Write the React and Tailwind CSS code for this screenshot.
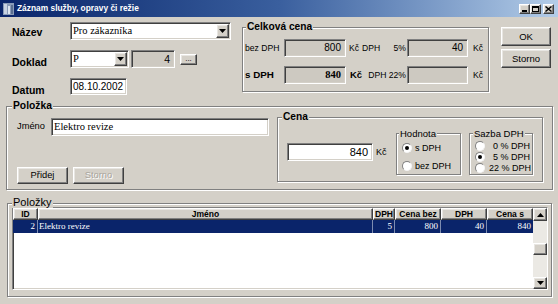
import React from "react";

const sunken =
  "border border-t-[#808080] border-l-[#808080] border-b-white border-r-white shadow-[inset_1px_1px_0_#404040,inset_-1px_-1px_0_#d4d0c8]";
const raised =
  "border border-t-white border-l-white border-b-[#404040] border-r-[#404040] shadow-[inset_-1px_-1px_0_#808080,inset_1px_1px_0_#e8e6e2]";
const group =
  "relative border border-[#808080] shadow-[inset_1px_1px_0_#fff,1px_1px_0_#fff]";

function Down() {
  return (
    <svg width="7" height="4" viewBox="0 0 7 4">
      <path d="M0 0h7L3.5 4z" fill="#000" />
    </svg>
  );
}
function Up() {
  return (
    <svg width="7" height="4" viewBox="0 0 7 4">
      <path d="M0 4h7L3.5 0z" fill="#000" />
    </svg>
  );
}

function DropBtn() {
  return (
    <div className={`${raised} bg-[#d4d0c8] w-[13px] h-[14px] flex items-center justify-center shrink-0 mr-[1px]`}>
      <Down />
    </div>
  );
}

function Radio({ checked }) {
  return (
    <span className="w-[10px] h-[10px] rounded-full bg-white border border-t-[#808080] border-l-[#808080] border-b-[#f4f4f4] border-r-[#f4f4f4] flex items-center justify-center shrink-0">
      {checked ? <span className="w-[4px] h-[4px] rounded-full bg-black" /> : null}
    </span>
  );
}

function Legend({ children, className }) {
  return (
    <span className={`absolute bg-[#d4d0c8] px-[1px] leading-none ${className}`}>{children}</span>
  );
}

export default function App() {
  const serif = "font-['Liberation_Serif','Times_New_Roman',serif]";
  return (
    <div className="w-[558px] h-[304px] bg-[#d4d0c8] overflow-hidden flex flex-col font-['Liberation_Sans',Arial,sans-serif] text-[9px] text-black leading-none">
      {/* Title bar */}
      <div className="h-[17px] shrink-0 flex items-center bg-linear-to-r from-[#0a246a] via-[#3a5f9e] to-[#b4cde8]">
        <svg className="ml-[3px]" width="11" height="12" viewBox="0 0 11 12">
          <rect x="0" y="0" width="11" height="12" fill="#8a9bb8" />
          <rect x="1" y="1" width="3" height="10" fill="#c8d2e2" />
          <rect x="5" y="3" width="2" height="8" fill="#dfe6f0" />
          <rect x="8" y="2" width="2" height="9" fill="#5b6f92" />
        </svg>
        <span className="ml-[3px] text-white font-bold text-[8.4px] tracking-[0px]">Záznam služby, opravy či režie</span>
        <div className="ml-auto mr-[4px] flex items-center">
          <div className={`${raised} bg-[#d4d0c8] w-[11px] h-[10px] flex items-end justify-center pb-[1px]`}>
            <span className="w-[5px] h-[2px] bg-black" />
          </div>
          <div className={`${raised} bg-[#d4d0c8] w-[11px] h-[10px] flex items-center justify-center`}>
            <span className="w-[7px] h-[6px] border border-black border-t-2" />
          </div>
          <div className={`${raised} bg-[#d4d0c8] w-[11px] h-[10px] ml-[2px] flex items-center justify-center`}>
            <svg width="7" height="6" viewBox="0 0 7 6">
              <path d="M0.5 0.5L6.5 5.5M6.5 0.5L0.5 5.5" stroke="#000" strokeWidth="1.4" />
            </svg>
          </div>
        </div>
      </div>

      {/* Top section */}
      <div className="h-[89px] shrink-0 flex items-start">
        <div className="w-[231px] pl-[12px] flex flex-col">
          <div className="mt-[5px] h-[18px] flex items-start">
            <span className="w-[58px] pt-[5px] font-bold text-[10.5px]">Název</span>
            <div className={`${sunken} bg-white w-[161px] h-[18px] flex items-center`}>
              <span className={`${serif} text-[10.5px] pl-[2px] flex-1`}>Pro zákazníka</span>
              <DropBtn />
            </div>
          </div>
          <div className="mt-[10px] h-[18px] flex items-start">
            <span className="w-[58px] pt-[7px] font-bold text-[10.5px]">Doklad</span>
            <div className={`${sunken} bg-white w-[59px] h-[18px] flex items-center`}>
              <span className={`${serif} text-[10.5px] pl-[2px] flex-1`}>P</span>
              <DropBtn />
            </div>
            <div className={`${sunken} bg-[#cdc9c1] ml-[2px] w-[44px] h-[18px] flex items-center justify-end pr-[4px] text-[10.5px]`}>4</div>
            <div className={`${raised} bg-[#d4d0c8] ml-[5px] mt-[4px] w-[17px] h-[11px] flex items-end justify-center text-[8px] pb-[1px]`}>...</div>
          </div>
          <div className="mt-[10px] h-[17px] flex items-start">
            <span className="w-[58px] pt-[7px] font-bold text-[10.5px]">Datum</span>
            <div className={`${sunken} bg-white w-[57px] h-[17px] flex items-center pl-[2px] text-[10px]`}>08.10.2002</div>
          </div>
        </div>

        {/* Celková cena */}
        <div className={`${group} ml-[11px] mt-[10px] w-[247px] h-[65px] flex flex-col`}>
          <Legend className="-top-[6px] left-[3px] font-bold text-[10.2px]">Celková cena</Legend>
          <div className="mt-[11px] h-[18px] flex items-center pl-[2px]">
            <span className="w-[39px] text-[8.6px]">bez DPH</span>
            <div className={`${sunken} bg-[#cdc9c1] w-[62px] h-[18px] flex items-center justify-end pr-[4px] text-[10px]`}>800</div>
            <div className="w-[61px] flex items-center text-[8.6px]">
              <span className="ml-[3px]">Kč</span>
              <span className="ml-[3px]">DPH</span>
              <span className="ml-auto mr-[1px]">5%</span>
            </div>
            <div className={`${sunken} bg-[#cdc9c1] w-[61px] h-[18px] flex items-center justify-end pr-[4px] text-[10px]`}>40</div>
            <span className="ml-[5px] text-[8.6px]">Kč</span>
          </div>
          <div className="mt-[9px] h-[18px] flex items-center pl-[2px]">
            <span className="w-[39px] font-bold text-[9.8px]">s DPH</span>
            <div className={`${sunken} bg-[#cdc9c1] w-[62px] h-[18px] flex items-center justify-end pr-[4px] text-[10.5px] font-bold ${serif}`}>840</div>
            <div className="w-[61px] flex items-center text-[8.6px]">
              <span className="ml-[4px] font-bold text-[9.5px]">Kč</span>
              <span className="ml-auto mr-[1px]">DPH 22%</span>
            </div>
            <div className={`${sunken} bg-[#cdc9c1] w-[61px] h-[18px]`} />
            <span className="ml-[5px] text-[8.6px]">Kč</span>
          </div>
        </div>

        {/* Buttons */}
        <div className="ml-[12px] mt-[10px] flex flex-col gap-[3px]">
          <div className={`${raised} bg-[#d4d0c8] w-[50px] h-[19px] flex items-center justify-center text-[9.5px]`}>OK</div>
          <div className={`${raised} bg-[#d4d0c8] w-[50px] h-[19px] flex items-center justify-center text-[9.5px]`}>Storno</div>
        </div>
      </div>

      {/* Položka */}
      <div className={`${group} ml-[6px] w-[547px] h-[84px] shrink-0 flex items-start`}>
        <Legend className="-top-[6px] left-[5px] font-bold text-[10.3px]">Položka</Legend>
        <div className="w-[270px] pl-[10px] flex flex-col">
          <div className="mt-[11px] h-[18px] flex items-center">
            <span className="w-[34px] text-[9.3px]">Jméno</span>
            <div className={`${sunken} bg-white w-[218px] h-[18px] flex items-center pl-[2px] ${serif} text-[10.5px]`}>Elektro revize</div>
          </div>
          <div className="mt-[31px] flex gap-[5px]">
            <div className={`${raised} bg-[#d4d0c8] w-[51px] h-[17px] flex items-center justify-center text-[9.3px]`}>Přidej</div>
            <div className={`${raised} bg-[#d4d0c8] w-[51px] h-[17px] flex items-center justify-center text-[9.3px] text-[#a8a49c] [text-shadow:1px_1px_0_#fff]`}>Storno</div>
          </div>
        </div>

        {/* Cena */}
        <div className={`${group} mt-[10px] w-[266px] h-[65px] flex items-start`}>
          <Legend className="-top-[6px] left-[4px] font-bold text-[10.2px]">Cena</Legend>
          <div className="w-[118px] pl-[9px] pt-[25px] flex items-center">
            <div className={`${sunken} bg-white w-[86px] h-[18px] flex items-center justify-end pr-[4px] text-[11px]`}>840</div>
            <span className="ml-[3px] text-[9px]">Kč</span>
          </div>
          <div className={`${group} mt-[15px] w-[65px] h-[42px] flex flex-col`}>
            <Legend className="-top-[5px] left-[2px] text-[9.5px]">Hodnota</Legend>
            <div className="mt-[9px] ml-[5px] flex items-center gap-[3px] text-[9px]">
              <Radio checked />
              <span>s DPH</span>
            </div>
            <div className="mt-[8px] ml-[5px] flex items-center gap-[3px] text-[9px]">
              <Radio />
              <span>bez DPH</span>
            </div>
          </div>
          <div className={`${group} ml-[8px] mt-[15px] w-[64px] h-[42px] flex flex-col`}>
            <Legend className="-top-[5px] left-[3px] text-[9.5px]">Sazba DPH</Legend>
            <div className="mt-[7px] ml-[5px] flex items-center text-[9px]">
              <Radio />
              <span className="ml-[8px]">0 % DPH</span>
            </div>
            <div className="mt-[1px] ml-[5px] flex items-center text-[9px]">
              <Radio checked />
              <span className="ml-[8px]">5 % DPH</span>
            </div>
            <div className="mt-[1px] ml-[5px] flex items-center text-[9px]">
              <Radio />
              <span className="ml-[4px]">22 % DPH</span>
            </div>
          </div>
        </div>
      </div>

      {/* Položky */}
      <div className={`${group} ml-[7px] mt-[13px] w-[545px] h-[94px] shrink-0`}>
        <Legend className="-top-[7px] left-[4px] text-[11px]">Položky</Legend>
        <div className={`${sunken} bg-white ml-[4px] mt-[3px] w-[536px] h-[83px] flex`}>
          <div className="w-[520px] flex flex-col">
            <div className="h-[12px] flex font-bold text-[8.5px]">
              <div className={`${raised} bg-[#d4d0c8] w-[25px] flex items-center justify-center`}>ID</div>
              <div className={`${raised} bg-[#d4d0c8] w-[335px] flex items-center justify-center`}>Jméno</div>
              <div className={`${raised} bg-[#d4d0c8] w-[22px] flex items-center justify-center`}>DPH</div>
              <div className={`${raised} bg-[#d4d0c8] w-[46px] flex items-center justify-center`}>Cena bez</div>
              <div className={`${raised} bg-[#d4d0c8] w-[46px] flex items-center justify-center`}>DPH</div>
              <div className={`${raised} bg-[#d4d0c8] w-[46px] flex items-center justify-center`}>Cena s</div>
            </div>
            <div className={`h-[13px] flex bg-[#0a246a] text-white text-[9px] ${serif}`}>
              <div className="w-[25px] flex items-center justify-end pr-[2px] border-r border-[#7d8cb0]">2</div>
              <div className="w-[335px] flex items-center pl-[1px] border-r border-[#7d8cb0]">Elektro revize</div>
              <div className="w-[22px] flex items-center justify-end pr-[2px] border-r border-[#7d8cb0]">5</div>
              <div className="w-[46px] flex items-center justify-end pr-[2px] border-r border-[#7d8cb0]">800</div>
              <div className="w-[46px] flex items-center justify-end pr-[2px] border-r border-[#7d8cb0]">40</div>
              <div className="w-[46px] flex items-center justify-end pr-[2px]">840</div>
            </div>
          </div>
          <div className="w-[14px] bg-[#ebe9e4] flex flex-col">
            <div className={`${raised} bg-[#d4d0c8] h-[13px] flex items-center justify-center`}>
              <Up />
            </div>
            <div className={`${raised} bg-[#d4d0c8] h-[12px] mt-[22px]`} />
            <div className={`${raised} bg-[#d4d0c8] h-[12px] mt-auto flex items-center justify-center`}>
              <Down />
            </div>
          </div>
        </div>
      </div>
    </div>
  );
}
